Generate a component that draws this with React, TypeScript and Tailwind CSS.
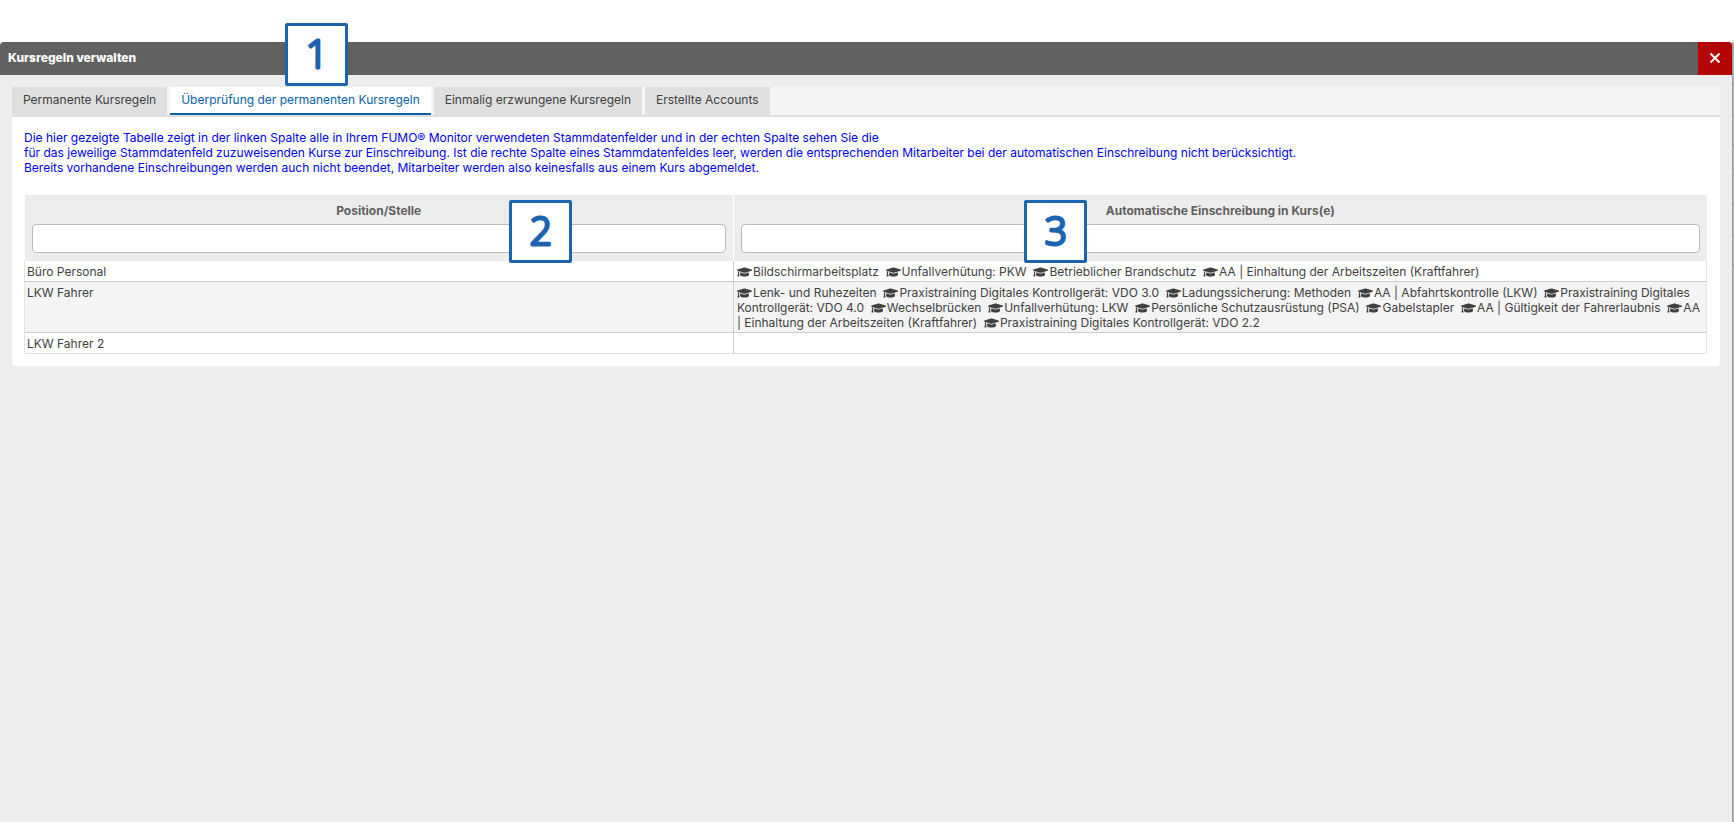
import React, { useState } from 'react';
import { FaGraduationCap } from 'react-icons/fa';
import { clsx } from 'clsx';

interface Rule {
  position: string;
  courses: string[];
}

const tabs = [
  'Permanente Kursregeln',
  'Überprüfung der permanenten Kursregeln',
  'Einmalig erzwungene Kursregeln',
  'Erstellte Accounts'
];

const rules: Rule[] = [
  {
    position: 'Büro Personal',
    courses: [
      'Bildschirmarbeitsplatz',
      'Unfallverhütung: PKW',
      'Betrieblicher Brandschutz',
      'AA | Einhaltung der Arbeitszeiten (Kraftfahrer)'
    ]
  },
  {
    position: 'LKW Fahrer',
    courses: [
      'Lenk- und Ruhezeiten',
      'Praxistraining Digitales Kontrollgerät: VDO 3.0',
      'Ladungssicherung: Methoden',
      'AA | Abfahrtskontrolle (LKW)',
      'Praxistraining Digitales Kontrollgerät: VDO 4.0',
      'Wechselbrücken',
      'Unfallverhütung: LKW',
      'Persönliche Schutzausrüstung (PSA)',
      'Gabelstapler',
      'AA | Gültigkeit der Fahrerlaubnis',
      'AA | Einhaltung der Arbeitszeiten (Kraftfahrer)',
      'Praxistraining Digitales Kontrollgerät: VDO 2.2'
    ]
  },
  { position: 'LKW Fahrer 2', courses: [] }
];

const Callout: React.FC<{ label: string; className: string }> = ({ label, className }) => (
  <span
    className={clsx(
      'absolute z-10 block h-[63px] w-[63px] rounded-[2px] border-[3px] border-[#1c63b0] bg-white',
      className
    )}
  >
    <svg viewBox="0 0 57 57" className="h-full w-full">
      <text
        x="29"
        y="42"
        textAnchor="middle"
        fill="#1c63b0"
        stroke="#1c63b0"
        strokeWidth="3"
        strokeLinejoin="round"
        className="font-['Open_Sans',sans-serif] text-[39px] font-light"
      >
        {label}
      </text>
    </svg>
  </span>
);

const App: React.FC = () => {
  const [activeTab, setActiveTab] = useState(1);
  const [filters, setFilters] = useState({ position: '', course: '' });

  const visible = rules.filter(rule =>
    rule.position.toLowerCase().includes(filters.position.toLowerCase()) &&
    rule.courses.join(' ').toLowerCase().includes(filters.course.toLowerCase())
  );

  return (
    <div className="flex min-h-screen flex-col bg-white pt-[42px] font-[Inter,sans-serif] text-[12px] leading-[15px] text-[#404040]">
      <div className="flex flex-1">
        <section className="flex min-w-0 flex-1 flex-col rounded-t-[4px] bg-[#ededed]">
          <header className="flex h-[33px] items-stretch justify-between overflow-hidden rounded-t-[4px] bg-[#616161]">
            <h1 className="flex items-center pb-[2px] pl-2 font-extrabold text-white">Kursregeln verwalten</h1>
            <button type="button" aria-label="Schließen" className="flex w-[34px] items-center justify-center bg-[#b40404] pb-[2px]">
              <svg viewBox="0 0 12 12" className="h-3 w-3" fill="none" stroke="#fff" strokeWidth="2">
                <path d="M1.5 1.5l9 9M10.5 1.5l-9 9" />
              </svg>
            </button>
          </header>

          <main className="m-3 rounded-b-[4px] bg-white">
            {/* Tabs */}
            <nav className="flex gap-[3px] border-b-2 border-[#dfdfdf] bg-[#f4f4f4]">
              {tabs.map((tab, index) => (
                <button
                  key={tab}
                  type="button"
                  onClick={() => setActiveTab(index)}
                  className={clsx(
                    'relative h-7 border-b-2 px-[11px] pb-[2px] whitespace-nowrap',
                    index === activeTab
                      ? 'border-[#0b5fa8] bg-white text-[#0b5fa8]'
                      : 'border-[#dfdfdf] bg-[#dfdfdf]'
                  )}
                >
                  {tab}
                  {index === 1 && <Callout label="1" className="-top-16 left-[115px]" />}
                </button>
              ))}
            </nav>

            <div className="pt-[13px] pr-[13px] pb-3 pl-3">
              <p className="text-[#0000f0]">
                Die hier gezeigte Tabelle zeigt in der linken Spalte alle in Ihrem FUMO® Monitor verwendeten Stammdatenfelder und in der echten Spalte sehen Sie die<br />
                für das jeweilige Stammdatenfeld zuzuweisenden Kurse zur Einschreibung. Ist die rechte Spalte eines Stammdatenfeldes leer, werden die entsprechenden Mitarbeiter bei der automatischen Einschreibung nicht berücksichtigt.<br />
                Bereits vorhandene Einschreibungen werden auch nicht beendet, Mitarbeiter werden also keinesfalls aus einem Kurs abgemeldet.
              </p>

              <table className="mt-5 w-full table-fixed border-collapse">
                <colgroup>
                  <col className="w-[42.15%]" />
                  <col />
                </colgroup>
                <thead>
                  <tr>
                    <th className="relative border-r border-white bg-[#ededed] px-[7px] pt-2 pb-2 font-bold text-[#606060]">
                      <label htmlFor="filter-position" className="block">Position/Stelle</label>
                      <input
                        id="filter-position"
                        type="text"
                        value={filters.position}
                        onChange={(e) => setFilters({ ...filters, position: e.target.value })}
                        className="mt-[6px] block h-[29px] w-full rounded-[4px] border border-[#b9b9b9] bg-white px-2 font-normal"
                      />
                      <Callout label="2" className="top-[5px] left-[484px]" />
                    </th>
                    <th className="relative bg-[#ededed] px-[7px] pt-2 pb-2 font-bold text-[#606060]">
                      <label htmlFor="filter-course" className="block">Automatische Einschreibung in Kurs(e)</label>
                      <input
                        id="filter-course"
                        type="text"
                        value={filters.course}
                        onChange={(e) => setFilters({ ...filters, course: e.target.value })}
                        className="mt-[6px] block h-[29px] w-full rounded-[4px] border border-[#b9b9b9] bg-white px-2 font-normal"
                      />
                      <Callout label="3" className="top-[5px] left-[290px]" />
                    </th>
                  </tr>
                </thead>
                <tbody>
                  {visible.map(rule => (
                    <tr key={rule.position} className="border-b border-[#cccccc] align-top even:bg-[#f4f4f4] last:border-[#e4e4e4]">
                      <td className="border-x border-l-[#e4e4e4] border-r-[#cccccc] px-[2px] pt-[3px] pb-[2px]">{rule.position}</td>
                      <td className="h-5 border-r border-[#e4e4e4] px-[3px] pt-[3px] pb-[2px]">
                        {rule.courses.map(course => (
                          <React.Fragment key={course}>
                            <FaGraduationCap className="mr-px inline h-3 w-[15px] align-[-2px]" />
                            {`${course}\u00a0 `}
                          </React.Fragment>
                        ))}
                      </td>
                    </tr>
                  ))}
                </tbody>
              </table>
            </div>
          </main>
        </section>
        {/* Page behind the dialog */}
        <div className="w-[2px] border-l border-[#999999] bg-[#bcbcbc]">
          <div className="h-3" />
          {Array.from({ length: 8 }, (_, i) => (
            <div key={i} className="h-[30px] border-t border-[#8c8c8c]" />
          ))}
        </div>
      </div>
    </div>
  );
};

export default App;
